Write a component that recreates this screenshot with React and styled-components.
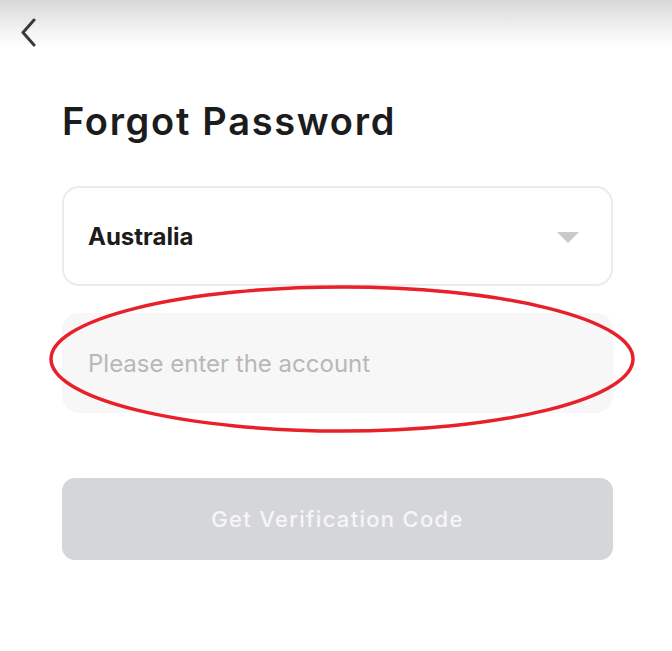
import React from 'react'
import styled, { createGlobalStyle } from 'styled-components'

const GlobalStyle = createGlobalStyle`
  html, body {
    margin: 0;
    padding: 0;
    background: #ffffff;
    font-family: Inter, Roboto, "Liberation Sans", sans-serif;
  }
  * { box-sizing: border-box; }
`;

const Screen = styled.div`
  position: relative;
  width: 672px;
  height: 651px;
  overflow: hidden;
  background: linear-gradient(to bottom, #d8d8d8 0px, #f1f1f1 28px, #ffffff 48px, #ffffff 100%);
`;

const TopBar = styled.div`
  height: 64px;
  display: flex;
  align-items: center;
  padding: 0 0 0 14px;
`;

const BackButton = styled.button`
  border: none;
  background: transparent;
  padding: 0;
  width: 28px;
  height: 32px;
  display: flex;
  align-items: center;
  justify-content: center;
`;

const Content = styled.div`
  padding: 0 59px 0 62px;
  display: flex;
  flex-direction: column;
`;

const Title = styled.h1`
  margin: 32px 0 0 0;
  font-size: 38px;
  font-weight: 600;
  color: #1c1c1c;
  letter-spacing: 1.7px;
  line-height: 50px;
`;

const Select = styled.div`
  margin-top: 40px;
  height: 100px;
  border: 2px solid #ebebeb;
  border-radius: 17px;
  display: flex;
  align-items: center;
  justify-content: space-between;
  padding: 0 32px 0 24px;
`;

const SelectText = styled.span`
  font-size: 24px;
  font-weight: 700;
  color: #1c1c1c;
`;

const Caret = styled.span`
  width: 0;
  height: 0;
  border-left: 11px solid transparent;
  border-right: 11px solid transparent;
  border-top: 11px solid #c9c9c9;
  margin-top: 2px;
`;

const Input = styled.input`
  margin-top: 27px;
  height: 100px;
  border: none;
  outline: none;
  border-radius: 17px;
  background: #f7f7f7;
  padding: 0 26px;
  font-family: inherit;
  font-size: 24px;
  color: #1c1c1c;
  &::placeholder {
    color: #b8b8b8;
  }
`;

const SubmitButton = styled.button`
  margin-top: 65px;
  height: 82px;
  border: none;
  border-radius: 13px;
  background: #d5d6da;
  color: #f6f6f8;
  font-family: inherit;
  font-size: 22px;
  font-weight: 500;
  letter-spacing: 1.3px;
`;

const Annotation = styled.svg`
  position: absolute;
  left: 0;
  top: 0;
  pointer-events: none;
`;

export default function App() {
  return (
    <>
      <GlobalStyle />
      <Screen>
        <TopBar>
          <BackButton aria-label="Back">
            <svg width="20" height="30" viewBox="0 0 20 30">
              <path d="M16 3 L5 15.5 L16 28" fill="none" stroke="#3a3a3a" strokeWidth="3" strokeLinecap="round" strokeLinejoin="round" />
            </svg>
          </BackButton>
        </TopBar>
        <Content>
          <Title>Forgot Password</Title>
          <Select>
            <SelectText>Australia</SelectText>
            <Caret />
          </Select>
          <Input placeholder="Please enter the account" />
          <SubmitButton disabled>Get Verification Code</SubmitButton>
        </Content>
        <Annotation width="672" height="651" viewBox="0 0 672 651">
          <ellipse cx="342" cy="359" rx="291" ry="72" fill="none" stroke="#e8202a" strokeWidth="3.5" />
        </Annotation>
      </Screen>
    </>
  )
}
